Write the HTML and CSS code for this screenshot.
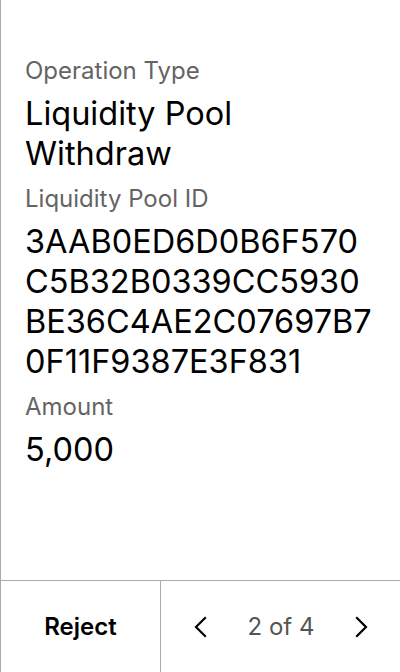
FILE: index.html
```html
<!DOCTYPE html>
<html lang="en">
<head>
<meta charset="utf-8">
<title>Operation</title>
<link rel="stylesheet" href="styles.css">
</head>
<body>
<div class="page">
  <main class="details">
    <div class="field">
      <div class="label">Operation Type</div>
      <div class="value">Liquidity Pool Withdraw</div>
    </div>
    <div class="field">
      <div class="label">Liquidity Pool ID</div>
      <div class="value"><span class="chunk">3AAB0ED6D0B6F570</span><span class="chunk">C5B32B0339CC5930</span><span class="chunk">BE36C4AE2C07697B7</span><span class="chunk">0F11F9387E3F831</span></div>
    </div>
    <div class="field">
      <div class="label">Amount</div>
      <div class="value">5,000</div>
    </div>
  </main>
  <footer class="footer">
    <button class="reject" type="button">Reject</button>
    <div class="pager">
      <button class="nav" type="button" aria-label="Previous">
        <svg width="16" height="22" viewBox="0 0 16 22"><path d="M13 2 L4 11 L13 20" fill="none" stroke="#000" stroke-width="2.2" stroke-linecap="square"/></svg>
      </button>
      <span class="count">2 of 4</span>
      <button class="nav" type="button" aria-label="Next">
        <svg width="16" height="22" viewBox="0 0 16 22"><path d="M3 2 L12 11 L3 20" fill="none" stroke="#000" stroke-width="2.2" stroke-linecap="square"/></svg>
      </button>
    </div>
  </footer>
</div>
</body>
</html>
```
FILE: styles.css
```css
* { box-sizing: border-box; }
html, body {
  margin: 0;
  padding: 0;
  background: #fff;
}
body {
  font-family: Inter, "Noto Sans", sans-serif;
  color: #000;
}
.page {
  height: 672px;
  width: 400px;
  display: flex;
  flex-direction: column;
  border-left: 1px solid #aaaaaa;
}
.details {
  flex: 1;
  padding: 57px 26px 0 24px;
  display: flex;
  flex-direction: column;
  gap: 11px;
}
.field {
  display: flex;
  flex-direction: column;
  gap: 9px;
}
.label {
  font-size: 24px;
  line-height: 28px;
  color: #646464;
}
.value {
  font-size: 32.5px;
  line-height: 40px;
  color: #000;
}
.chunk { display: block; }
.footer {
  height: 92px;
  border-top: 1px solid #aaaaaa;
  display: flex;
}
.reject {
  width: 160px;
  border: 0;
  border-right: 1px solid #aaaaaa;
  background: none;
  padding: 0;
  font-family: Inter, "Noto Sans", sans-serif;
  font-size: 24px;
  font-weight: 600;
  color: #000;
}
.pager {
  flex: 1;
  display: flex;
  align-items: center;
  justify-content: space-between;
  padding: 0 29px 0 30px;
}
.nav {
  border: 0;
  background: none;
  padding: 0;
  width: 18px;
  height: 24px;
  display: flex;
  align-items: center;
  justify-content: center;
}
.count {
  font-size: 24px;
  color: #555;
}
```
